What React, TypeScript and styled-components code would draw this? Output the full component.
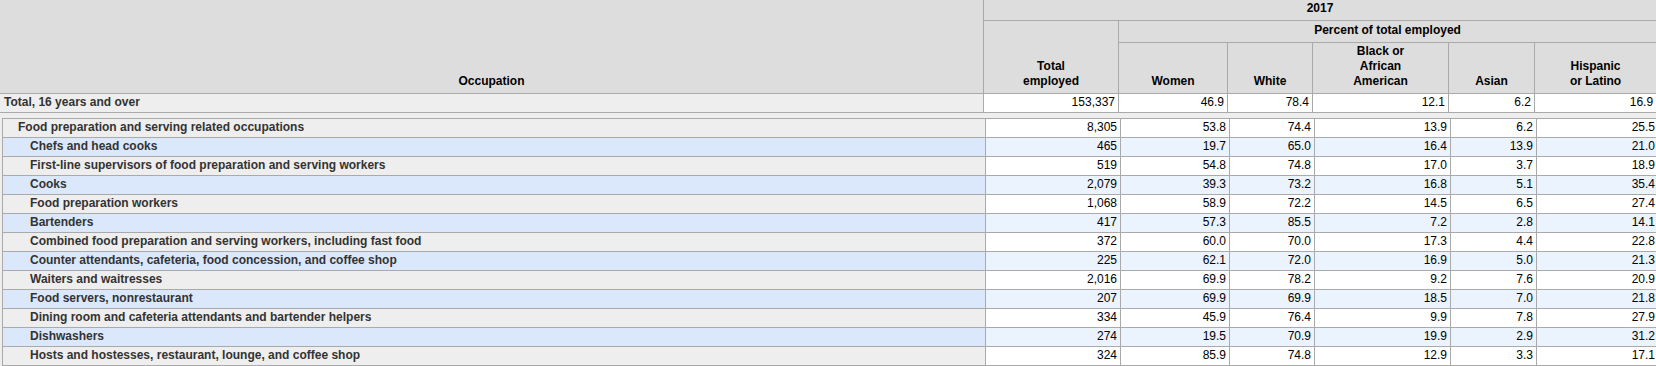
import styled, { createGlobalStyle } from "styled-components";

type Tone = "gray" | "blue";

interface Row {
    label: string;
    level: number;
    values: string[];
}

const GlobalStyle = createGlobalStyle`
    html, body {
        margin: 0;
        padding: 0;
        overflow: hidden;
        background: #eeeeee;
    }
`;

const Page = styled.div`
    width: 1656px;
    height: 366px;
    overflow: hidden;
    background: #eeeeee;
    font-family: "Liberation Sans", Arial, sans-serif;
    font-size: 12px;
`;

const Table = styled.table<{ $offset?: number; $gap?: number }>`
    width: 1657px;
    table-layout: fixed;
    border-collapse: separate;
    border-spacing: 0;
    margin-left: ${props => props.$offset ?? 0}px;
    margin-top: ${props => props.$gap ?? 0}px;
`;

const HeadCell = styled.th<{ $h?: number }>`
    box-sizing: border-box;
    height: ${props => (props.$h ? `${props.$h}px` : "auto")};
    padding: 0 4px 4px;
    background: #dddddd;
    border-right: 1px solid #aaaaaa;
    border-bottom: 1px solid #aaaaaa;
    color: #000000;
    font-weight: bold;
    text-align: center;
    vertical-align: bottom;
    line-height: 15px;
`;

const LabelCell = styled.th<{ $tone: Tone; $level: number; $edge?: boolean; $top?: boolean }>`
    box-sizing: border-box;
    height: ${props => (props.$top ? 20 : 19)}px;
    padding: 1px 3px 0 ${props => (props.$edge ? 3 : 4) + props.$level * 12}px;
    background: ${props => (props.$tone === "blue" ? "#dbe8fc" : "#eeeeee")};
    border-left: ${props => (props.$edge ? "1px solid #aaaaaa" : "none")};
    border-top: ${props => (props.$top ? "1px solid #aaaaaa" : "none")};
    border-right: 1px solid #aaaaaa;
    border-bottom: 1px solid #aaaaaa;
    color: #333333;
    font-weight: bold;
    text-align: left;
    vertical-align: top;
    line-height: 15px;
    white-space: nowrap;
`;

const ValueCell = styled.td<{ $tone: Tone; $top?: boolean }>`
    box-sizing: border-box;
    padding: 1px 3px 0;
    background: ${props => (props.$tone === "blue" ? "#ebf3fe" : "#ffffff")};
    border-top: ${props => (props.$top ? "1px solid #aaaaaa" : "none")};
    border-right: 1px solid #aaaaaa;
    border-bottom: 1px solid #aaaaaa;
    color: #000000;
    text-align: right;
    vertical-align: top;
    line-height: 15px;
`;

const widths = [984, 135, 109, 85, 136, 86, 122];

const rows: Row[] = [
    { label: "Food preparation and serving related occupations", level: 1, values: ["8,305", "53.8", "74.4", "13.9", "6.2", "25.5"] },
    { label: "Chefs and head cooks", level: 2, values: ["465", "19.7", "65.0", "16.4", "13.9", "21.0"] },
    { label: "First-line supervisors of food preparation and serving workers", level: 2, values: ["519", "54.8", "74.8", "17.0", "3.7", "18.9"] },
    { label: "Cooks", level: 2, values: ["2,079", "39.3", "73.2", "16.8", "5.1", "35.4"] },
    { label: "Food preparation workers", level: 2, values: ["1,068", "58.9", "72.2", "14.5", "6.5", "27.4"] },
    { label: "Bartenders", level: 2, values: ["417", "57.3", "85.5", "7.2", "2.8", "14.1"] },
    { label: "Combined food preparation and serving workers, including fast food", level: 2, values: ["372", "60.0", "70.0", "17.3", "4.4", "22.8"] },
    { label: "Counter attendants, cafeteria, food concession, and coffee shop", level: 2, values: ["225", "62.1", "72.0", "16.9", "5.0", "21.3"] },
    { label: "Waiters and waitresses", level: 2, values: ["2,016", "69.9", "78.2", "9.2", "7.6", "20.9"] },
    { label: "Food servers, nonrestaurant", level: 2, values: ["207", "69.9", "69.9", "18.5", "7.0", "21.8"] },
    { label: "Dining room and cafeteria attendants and bartender helpers", level: 2, values: ["334", "45.9", "76.4", "9.9", "7.8", "27.9"] },
    { label: "Dishwashers", level: 2, values: ["274", "19.5", "70.9", "19.9", "2.9", "31.2"] },
    { label: "Hosts and hostesses, restaurant, lounge, and coffee shop", level: 2, values: ["324", "85.9", "74.8", "12.9", "3.3", "17.1"] },
];

const total = ["153,337", "46.9", "78.4", "12.1", "6.2", "16.9"];

const Cols = () => (
    <colgroup>
        {widths.map((w, i) => (
            <col key={i} style={{ width: w }} />
        ))}
    </colgroup>
);

const App = () => {
    return (
        <Page>
            <GlobalStyle />
            <Table>
                <Cols />
                <thead>
                    <tr>
                        <HeadCell rowSpan={3}>Occupation</HeadCell>
                        <HeadCell colSpan={6} $h={21}>2017</HeadCell>
                    </tr>
                    <tr>
                        <HeadCell rowSpan={2}>Total<br />employed</HeadCell>
                        <HeadCell colSpan={5} $h={22}>Percent of total employed</HeadCell>
                    </tr>
                    <tr>
                        <HeadCell $h={51}>Women</HeadCell>
                        <HeadCell $h={51}>White</HeadCell>
                        <HeadCell $h={51}>Black or<br />African<br />American</HeadCell>
                        <HeadCell $h={51}>Asian</HeadCell>
                        <HeadCell $h={51}>Hispanic<br />or Latino</HeadCell>
                    </tr>
                </thead>
                <tbody>
                    <tr>
                        <LabelCell $tone="gray" $level={0}>Total, 16 years and over</LabelCell>
                        {total.map((v, i) => (
                            <ValueCell key={i} $tone="gray">{v}</ValueCell>
                        ))}
                    </tr>
                </tbody>
            </Table>
            <Table $offset={2} $gap={5}>
                <Cols />
                <tbody>
                    {rows.map((row, r) => {
                        const tone: Tone = r % 2 === 1 ? "blue" : "gray";
                        const top = r === 0;
                        return (
                            <tr key={row.label}>
                                <LabelCell $tone={tone} $level={row.level} $edge $top={top}>{row.label}</LabelCell>
                                {row.values.map((v, i) => (
                                    <ValueCell key={i} $tone={tone} $top={top}>{v}</ValueCell>
                                ))}
                            </tr>
                        );
                    })}
                </tbody>
            </Table>
        </Page>
    );
};

export default App;
